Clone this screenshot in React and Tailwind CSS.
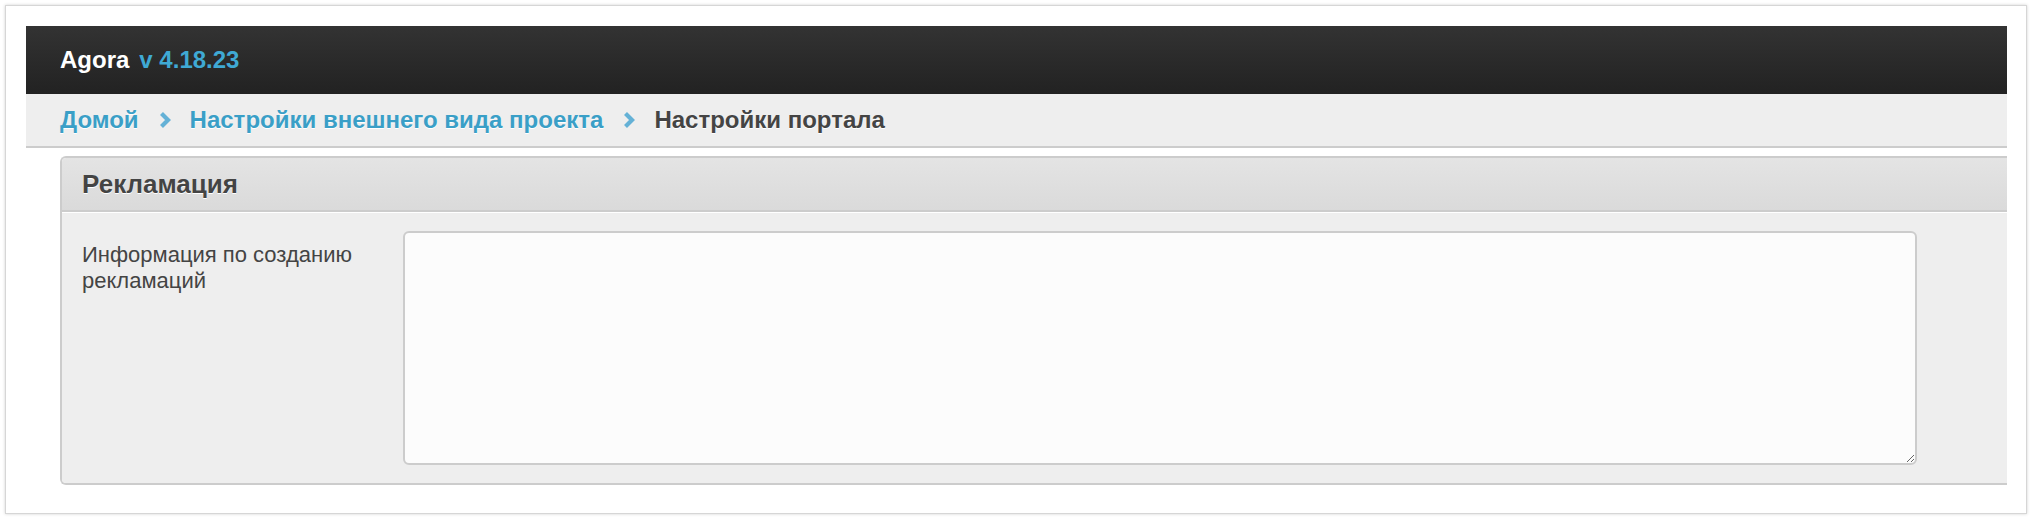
import { useState } from "react";

const FONT = { fontFamily: '"Liberation Sans", Arial, sans-serif' };

function Chevron() {
  return (
    <svg viewBox="0 0 12 16" className="w-[12px] h-[16px] shrink-0" aria-hidden="true">
      <path d="M2.5 1.5 L9 8 L2.5 14.5" fill="none" stroke="#64b1d6" strokeWidth="4.2" strokeLinejoin="miter" />
    </svg>
  );
}

function Breadcrumbs({ items }) {
  return (
    <nav className="h-[54px] bg-[#eeeeee] border-b-2 border-[#cccccc] flex items-center pl-[34px] gap-[20px] text-[24px] font-bold [text-shadow:0_1px_0_#fff]">
      {items.map((it, i) => (
        <div key={it.label} className="flex items-center gap-[19px]">
          {i > 0 && <Chevron />}
          <span className={it.active ? "text-[#444444]" : "text-[#3a9fc7]"}>{it.label}</span>
        </div>
      ))}
    </nav>
  );
}

export default function App() {
  const [text, setText] = useState("");

  return (
    <div className="w-[2032px] h-[520px] bg-white p-[5px]" style={FONT}>
      <div className="h-[509px] bg-white border border-[#d6d6d6] shadow-[0_0_3px_rgba(0,0,0,0.18)] pt-[20px] pl-[20px] pr-[19px]">
        {/* top bar */}
        <header className="h-[68px] bg-gradient-to-b from-[#333333] to-[#222222] flex items-center pl-[34px] gap-[10px]">
          <span className="text-white font-bold text-[24px]">Agora</span>
          <span className="text-[#3fa9d4] font-bold text-[24px]">v 4.18.23</span>
        </header>

        <Breadcrumbs
          items={[
            { label: "Домой" },
            { label: "Настройки внешнего вида проекта" },
            { label: "Настройки портала", active: true },
          ]}
        />

        {/* settings panel */}
        <section className="mt-[8px] ml-[34px] border-2 border-r-0 border-[#cccccc] rounded-l-[6px] overflow-hidden">
          <div className="h-[54px] bg-gradient-to-b from-[#e4e4e4] to-[#dadada] border-b-2 border-[#cccccc] flex items-center pl-[20px]">
            <h2 className="text-[26px] font-bold text-[#444444] [text-shadow:0_1px_0_#fff]">Рекламация</h2>
          </div>
          <div className="border-t border-white bg-[#eeeeee] flex py-[18px]">
            <label className="w-[341px] shrink-0 pl-[20px] pt-[11px] text-[22px] leading-[26px] text-[#444444]">
              Информация по созданию
              <br />
              рекламаций
            </label>
            <textarea
              value={text}
              onChange={(e) => setText(e.target.value)}
              className="w-[1514px] h-[234px] bg-[#fcfcfc] border-2 border-[#cccccc] rounded-[6px] outline-none p-2"
            />
          </div>
        </section>
      </div>
    </div>
  );
}
